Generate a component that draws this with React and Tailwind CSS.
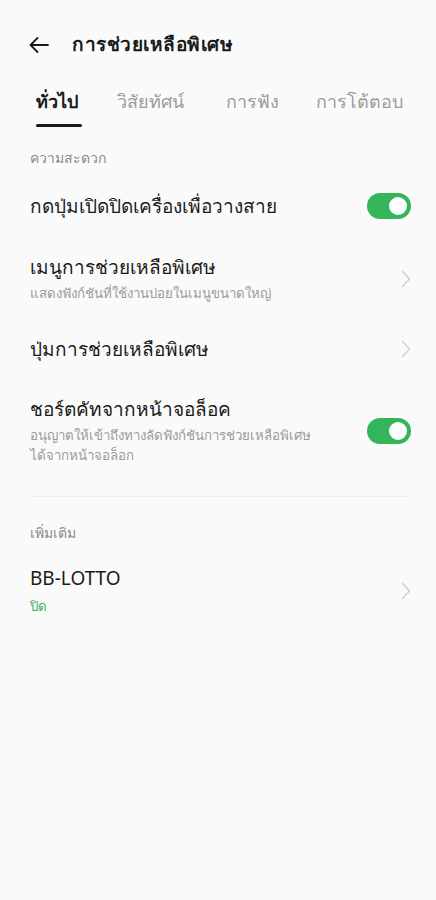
import React from 'react'

const Toggle = () => (
  <div className="w-[44px] h-[26px] rounded-full bg-[#34b55a] flex items-center justify-end pr-[4px] shrink-0">
    <div className="w-[18px] h-[18px] rounded-full bg-white"></div>
  </div>
)

const Chevron = () => (
  <svg width="10" height="18" viewBox="0 0 10 18" className="shrink-0">
    <path d="M1.5 1.5 L8.5 9 L1.5 16.5" fill="none" stroke="#cfcfcf" strokeWidth="1.4" strokeLinecap="round" strokeLinejoin="round" />
  </svg>
)

const Row = ({ title, sub, right, className = '', subClass = 'mt-[3px]' }) => (
  <div className={`flex items-center justify-between gap-4 ${className}`}>
    <div className="flex flex-col min-w-0">
      <div className="text-[19px] leading-[26px] text-[#1a1a1a]">{title}</div>
      {sub && <div className={`text-[13.3px] leading-[20px] text-[#9a9a9a] ${subClass}`}>{sub}</div>}
    </div>
    {right}
  </div>
)

export default function App() {
  return (
    <div className="w-[436px] h-[900px] bg-[#fafafa] font-['Noto_Sans',sans-serif]">
      {/* Header */}
      <div className="flex items-center pt-[31px] pl-[28px] h-[58px]">
        <svg width="22" height="18" viewBox="0 0 22 18">
          <path d="M20 9 H3 M9.5 2 L2.5 9 L9.5 16" fill="none" stroke="#1a1a1a" strokeWidth="1.8" strokeLinecap="round" strokeLinejoin="round" />
        </svg>
        <div className="ml-[22px] text-[19px] tracking-[0.5px] font-bold text-[#1a1a1a]">การช่วยเหลือพิเศษ</div>
      </div>

      {/* Tabs */}
      <div className="flex items-end pl-[36px] mt-[28px] text-[18px]">
        <div className="flex flex-col items-start w-[81px] shrink-0">
          <div className="font-bold text-[#1a1a1a] leading-[30px]">ทั่วไป</div>
          <div className="w-[46px] h-[3px] bg-[#1a1a1a] mt-[8px] rounded-full"></div>
        </div>
        <div className="w-[109px] shrink-0 text-[#9a9a9a] leading-[30px] mb-[11px] whitespace-nowrap">วิสัยทัศน์</div>
        <div className="w-[90px] shrink-0 text-[#9a9a9a] leading-[30px] mb-[11px] whitespace-nowrap">การฟัง</div>
        <div className="text-[#9a9a9a] leading-[30px] mb-[11px] whitespace-nowrap">การโต้ตอบ</div>
      </div>

      {/* Section */}
      <div className="pl-[30px] pr-[25px]">
        <div className="text-[14px] text-[#8a8a8a] mt-[20px]">ความสะดวก</div>

        <Row className="mt-[25px]" title="กดปุ่มเปิดปิดเครื่องเพื่อวางสาย" right={<Toggle />} />

        <Row className="mt-[35px]" title="เมนูการช่วยเหลือพิเศษ" sub="แสดงฟังก์ชันที่ใช้งานบ่อยในเมนูขนาดใหญ่" right={<Chevron />} />

        <Row className="mt-[33px]" title="ปุ่มการช่วยเหลือพิเศษ" right={<Chevron />} />

        <Row
          className="mt-[34px]"
          title="ชอร์ตคัทจากหน้าจอล็อค"
          sub={<>อนุญาตให้เข้าถึงทางลัดฟังก์ชันการช่วยเหลือพิเศษ<br />ได้จากหน้าจอล็อก</>}
          right={<Toggle />}
        />

        <div className="h-px bg-[#ececec] mt-[31px] mr-[3px]"></div>

        <div className="text-[14px] text-[#8a8a8a] mt-[25px]">เพิ่มเติม</div>

        <Row
          className="mt-[22px]"
          title="BB-LOTTO"
          subClass="mt-[5px]"
          sub={<span className="text-[#3fb25e]">ปิด</span>}
          right={<Chevron />}
        />
      </div>
    </div>
  )
}
